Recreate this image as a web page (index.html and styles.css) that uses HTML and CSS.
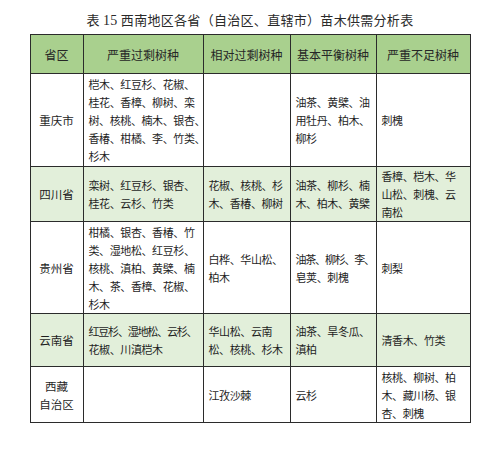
FILE: index.html
```html
<!DOCTYPE html>
<html lang="zh-CN">
<head>
<meta charset="utf-8">
<title>表15 西南地区各省苗木供需分析表</title>
<link rel="stylesheet" href="styles.css">
</head>
<body>
<div class="page">
  <h1 class="title">表 <span class="num">15</span> 西南地区各省（自治区、直辖市）苗木供需分析表</h1>
  <table class="grid">
    <colgroup>
      <col class="c1"><col class="c2"><col class="c3"><col class="c4"><col class="c5">
    </colgroup>
    <thead>
      <tr class="head">
        <th>省区</th>
        <th>严重过剩树种</th>
        <th>相对过剩树种</th>
        <th>基本平衡树种</th>
        <th>严重不足树种</th>
      </tr>
    </thead>
    <tbody>
      <tr class="r1">
        <td class="prov">重庆市</td>
        <td>桤木、红豆杉、花椒、<br>桂花、香樟、柳树、栾<br>树、核桃、楠木、银杏、<br>香椿、柑橘、李、竹类、<br>杉木</td>
        <td></td>
        <td>油茶、黄檗、油<br>用牡丹、柏木、<br>柳杉</td>
        <td>刺槐</td>
      </tr>
      <tr class="r2 alt">
        <td class="prov">四川省</td>
        <td>栾树、红豆杉、银杏、<br>桂花、云杉、竹类</td>
        <td>花椒、核桃、杉<br>木、香椿、柳树</td>
        <td>油茶、柳杉、楠<br>木、柏木、黄檗</td>
        <td>香樟、桤木、华<br>山松、刺槐、云<br>南松</td>
      </tr>
      <tr class="r3">
        <td class="prov">贵州省</td>
        <td>柑橘、银杏、香椿、竹<br>类、湿地松、红豆杉、<br>核桃、滇柏、黄檗、楠<br>木、茶、香樟、花椒、<br>杉木</td>
        <td>白桦、华山松、<br>柏木</td>
        <td><span class="tight">油茶、柳杉、李、</span><br>皂荚、刺槐</td>
        <td>刺梨</td>
      </tr>
      <tr class="r4 alt">
        <td class="prov">云南省</td>
        <td><span class="tight">红豆杉、湿地松、云杉、</span><br>花椒、川滇桤木</td>
        <td>华山松、云南<br>松、核桃、杉木</td>
        <td>油茶、旱冬瓜、<br>滇柏</td>
        <td>清香木、竹类</td>
      </tr>
      <tr class="r5">
        <td class="prov">西藏<br>自治区</td>
        <td></td>
        <td>江孜沙棘</td>
        <td>云杉</td>
        <td>核桃、柳树、柏<br>木、藏川杨、银<br>杏、刺槐</td>
      </tr>
    </tbody>
  </table>
</div>
</body>
</html>
```

FILE: styles.css
```css
html, body {
  margin: 0;
  padding: 0;
  background: #ffffff;
}

body {
  font-family: "Noto Sans CJK SC", "Noto Sans", sans-serif;
  color: #1e1e1e;
}

.page {
  width: 500px;
  padding-top: 10px;
}

.title {
  margin: 0 0 3px 0;
  text-align: center;
  font-size: 13px;
  line-height: 20px;
  font-weight: normal;
  color: #2a2a2a;
  letter-spacing: 0.3px;
}

.title .num {
  font-family: "Liberation Serif", serif;
  font-size: 14px;
}

.grid {
  margin: 0 auto;
  width: 440px;
  table-layout: fixed;
  border-collapse: collapse;
  border: 1px solid #2b2b2b;
}

.c1 { width: 53px; }
.c2 { width: 120px; }
.c3 { width: 87px; }
.c4 { width: 86px; }
.c5 { width: 94px; }

.grid th,
.grid td {
  border: 1px solid #2b2b2b;
  padding: 0 0 0 5px;
  vertical-align: middle;
  white-space: nowrap;
}

.grid th {
  font-size: 12px;
  font-weight: normal;
  text-align: center;
  background: #a9d08e;
  color: #262626;
  padding: 0;
}

.grid td {
  font-size: 11px;
  line-height: 18px;
  text-align: left;
  letter-spacing: -0.4px;
}

.grid td.prov {
  text-align: center;
  font-size: 11.5px;
  letter-spacing: 0;
  padding: 0;
}

.head { height: 39px; }
.r1 { height: 93px; }
.r2 { height: 55px; }
.r3 { height: 92px; }
.r4 { height: 53px; }
.r5 { height: 56px; }

.alt td {
  background: #e2efda;
}

.grid td .tight {
  letter-spacing: -1.2px;
}
```
